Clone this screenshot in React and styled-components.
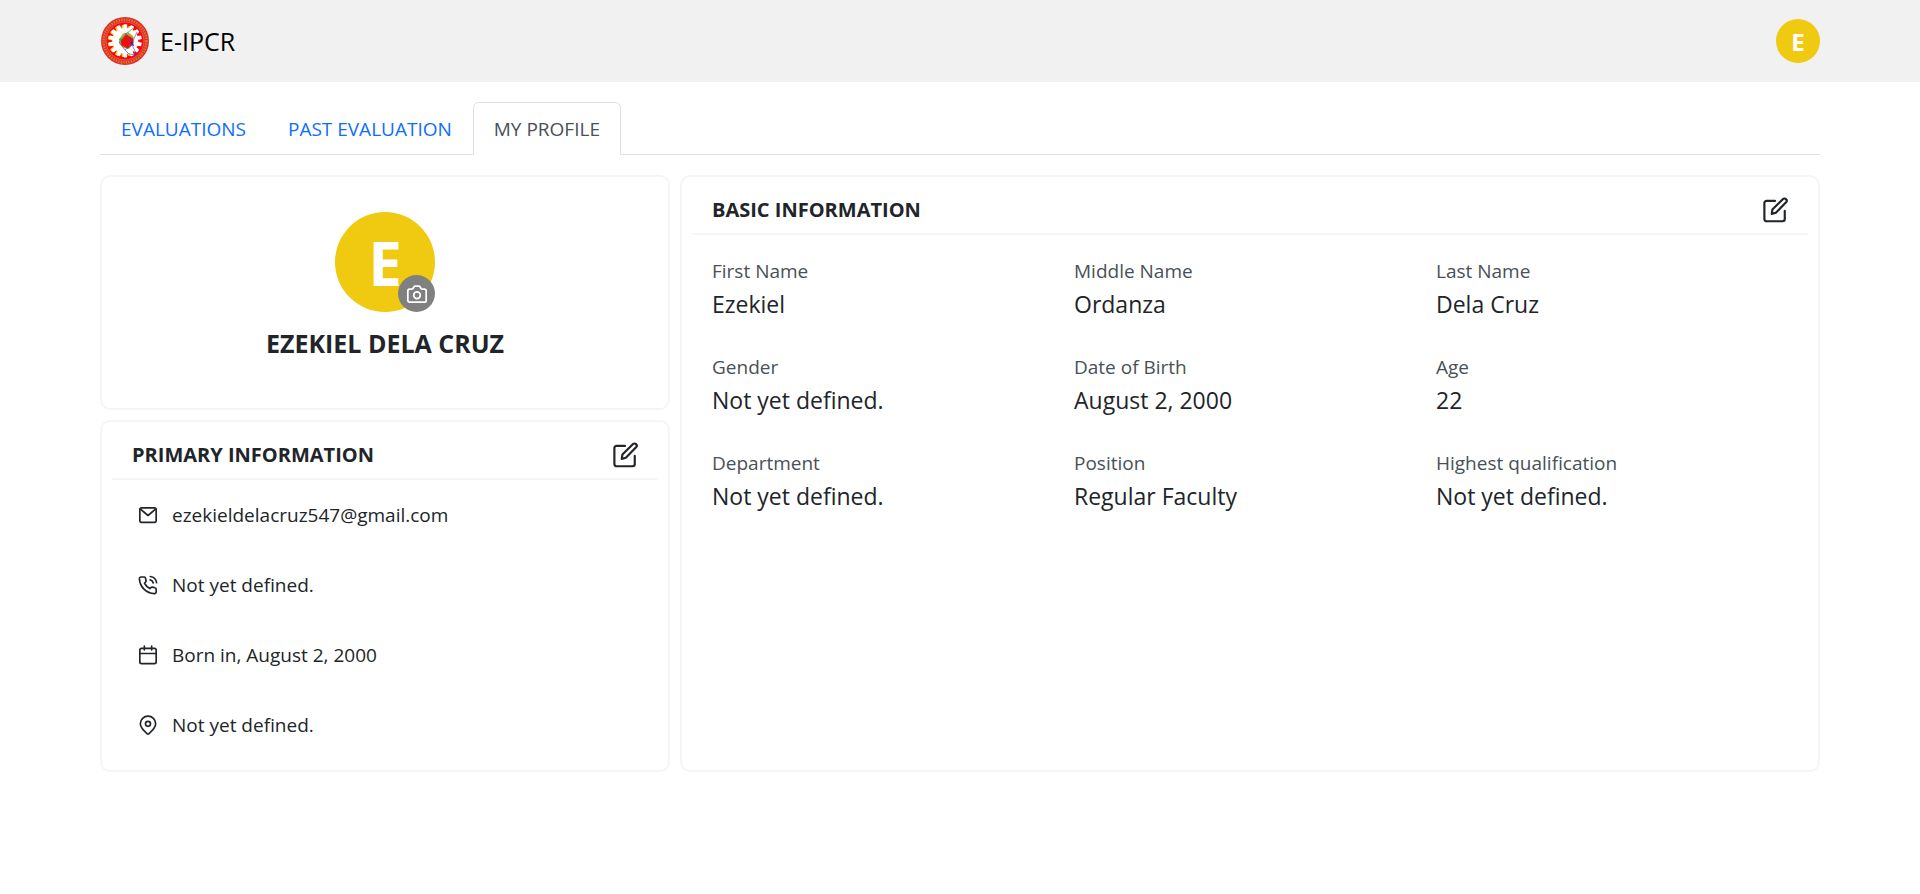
import React from "react";
import styled, { createGlobalStyle } from "styled-components";

const GlobalStyle = createGlobalStyle`
  *, *::before, *::after { box-sizing: border-box; }
  body {
    margin: 0;
    background: #fff;
    color: #212529;
    font-family: "Segoe UI", "Open Sans", "Noto Sans", sans-serif;
    font-size: 19px;
    line-height: 30px;
  }
  h1, h2, p, dl, dd, ul { margin: 0; padding: 0; }
  button { font: inherit; color: inherit; border: 0; background: none; padding: 0; cursor: pointer; }
  svg { display: block; }
`;

const Header = styled.header`
  display: flex;
  align-items: center;
  justify-content: space-between;
  height: 82px;
  padding: 0 100px;
  background: #f1f1f1;
`;

const Brand = styled.a`
  display: flex;
  align-items: center;
  gap: 10px;
  color: #000;
  font-size: 25px;
  font-weight: 500;
  text-decoration: none;
`;

const Avatar = styled.span`
  display: flex;
  align-items: center;
  justify-content: center;
  width: ${(p) => p.$size}px;
  height: ${(p) => p.$size}px;
  padding-top: 2px;
  border-radius: 50%;
  background: #f0c911;
  color: #fff;
  font-size: ${(p) => p.$font}px;
  font-weight: 700;
  line-height: 1;
`;

const Main = styled.main`
  padding: 20px 100px;
`;

const Tabs = styled.nav`
  display: flex;
  border-bottom: 1px solid #dee2e6;
`;

const Tab = styled.a`
  margin-bottom: -1px;
  padding: 11px 20px 10px;
  border: 1px solid;
  border-color: ${(p) => (p.$active ? "#dee2e6 #dee2e6 #fff" : "transparent")};
  border-radius: 6px 6px 0 0;
  color: ${(p) => (p.$active ? "#495057" : "#0d6efd")};
  text-decoration: none;
`;

const Columns = styled.div`
  display: grid;
  grid-template-columns: 1fr 2fr;
  gap: 10px;
  margin-top: 20px;
`;

const Side = styled.div`
  display: flex;
  flex-direction: column;
  gap: 10px;
`;

const Card = styled.section`
  padding: 10px;
  border: 2px solid #f5f5f5;
  border-radius: 10px;
`;

const ProfileCard = styled(Card)`
  display: flex;
  flex-direction: column;
  align-items: center;
  gap: 16px;
  padding: 35px 10px 50px;
`;

const Portrait = styled.div`
  position: relative;
`;

const CameraButton = styled.button`
  position: absolute;
  right: 0;
  bottom: 0;
  display: flex;
  align-items: center;
  justify-content: center;
  width: 37px;
  height: 37px;
  border-radius: 50%;
  background: #808080;
  color: #fff;
`;

const PersonName = styled.h1`
  font-size: 25px;
  font-weight: 700;
  line-height: 30px;
`;

const CardHead = styled.div`
  display: flex;
  align-items: center;
  justify-content: space-between;
  height: 48px;
  padding: 0 20px;
  border-bottom: 2px solid #f5f5f5;
`;

const CardTitle = styled.h2`
  font-size: 20px;
  font-weight: 700;
`;

const ContactList = styled.ul`
  list-style: none;
`;

const Contact = styled.li`
  display: flex;
  align-items: center;
  gap: 14px;
  height: 70px;
  padding: 0 26px;
`;

const Fields = styled.dl`
  display: grid;
  grid-template-columns: repeat(3, 1fr);
  gap: 30px 10px;
  padding: 21px 20px;
`;

const Label = styled.dt`
  color: #495057;
`;

const Value = styled.dd`
  font-size: 23px;
  line-height: 36px;
`;

const Icon = ({ size, stroke = 2, children }) => (
  <svg
    width={size}
    height={size}
    viewBox="0 0 24 24"
    fill="none"
    stroke="currentColor"
    strokeWidth={stroke}
    strokeLinecap="round"
    strokeLinejoin="round"
    aria-hidden="true"
  >
    {children}
  </svg>
);

const EditIcon = () => (
  <Icon size={26}>
    <path d="M12 3.6H4.2A2 2 0 0 0 2.2 5.6V20.4A2 2 0 0 0 4.2 22.4H19A2 2 0 0 0 21 20.4V12.8" />
    <path d="M9 15.6L9.6 11.6L19.2 2A1.9 1.9 0 0 1 22.2 4.9L12.8 14.6Z" />
  </Icon>
);

const CameraIcon = () => (
  <Icon size={22} stroke={1.9}>
    <path d="M2 19V8.6A1.9 1.9 0 0 1 3.9 6.7H6.2A1.6 1.6 0 0 0 7.6 6L8.7 4.1A1.4 1.4 0 0 1 9.9 3.4H14.1A1.4 1.4 0 0 1 15.3 4.1L16.4 6A1.6 1.6 0 0 0 17.8 6.7H20.1A1.9 1.9 0 0 1 22 8.6V19A1.9 1.9 0 0 1 20.1 20.9H3.9A1.9 1.9 0 0 1 2 19Z" />
    <circle cx="12" cy="13.4" r="3.6" />
  </Icon>
);

const MailIcon = () => (
  <Icon size={20}>
    <rect x="2.2" y="3.4" width="19.6" height="17.4" rx="2.2" />
    <path d="M3 5L12 12.6L21 5" />
  </Icon>
);

const PhoneIcon = () => (
  <Icon size={20}>
    <path d="M7.6 2.4H3.6A2 2 0 0 0 1.7 4.6C2.3 14.4 9.8 21.8 19.6 22.4A2 2 0 0 0 21.8 20.4V17.2A2 2 0 0 0 20.2 15.3L17.3 14.6A2 2 0 0 0 15.4 15.1L14.2 16.3C11.5 14.9 9.2 12.6 7.8 9.9L9.1 8.6A2 2 0 0 0 9.6 6.7L9 3.6A1.6 1.6 0 0 0 7.6 2.4Z" />
    <path d="M14.8 1.8C18.8 2.3 21.8 5.3 22.3 9.3" />
    <path d="M14.6 5.9C16.6 6.3 17.9 7.6 18.3 9.6" />
  </Icon>
);

const CalendarIcon = () => (
  <Icon size={20}>
    <rect x="2.2" y="4" width="19.6" height="18.4" rx="2" />
    <path d="M2.2 10.2H21.8M7.6 1.4V6M16.4 1.4V6" />
  </Icon>
);

const PinIcon = () => (
  <Icon size={20}>
    <path d="M21.2 10.6C21.2 15.2 16.6 19.4 13.2 22.4A1.8 1.8 0 0 1 10.8 22.4C7.4 19.4 2.8 15.2 2.8 10.6A9.2 9.2 0 0 1 21.2 10.6Z" />
    <circle cx="12" cy="10.6" r="3" />
  </Icon>
);

const TEETH = Array.from({ length: 14 }, (_, i) => (i * 360) / 14);

const Logo = () => (
  <svg width="50" height="50" viewBox="0 0 50 50" aria-hidden="true">
    <circle cx="25" cy="25" r="24" fill="#dc3030" />
    <circle cx="25" cy="25" r="21.4" fill="none" stroke="#dd7a1c" strokeWidth="2.4" strokeDasharray="1.4 1.2" />
    <circle cx="25" cy="25" r="18.9" fill="#fa0606" stroke="#ee7a70" strokeWidth="0.6" />
    <g fill="#e8d92a">
      {TEETH.map((a) => (
        <rect key={a} x="21.6" y="9" width="4" height="6" rx="1" transform={`rotate(${a} 23.6 25)`} />
      ))}
    </g>
    <g fill="#fff">
      {TEETH.map((a) => (
        <rect key={a} x="23.4" y="8.2" width="3.8" height="6" rx="0.8" transform={`rotate(${a} 25.3 24.8)`} />
      ))}
      <circle cx="25.3" cy="24.8" r="13" />
    </g>
    <path d="M19.4 23L23 17.4L28.6 16.2L33.4 20.6L34 27L29 33L23.4 32L19.4 28Z" fill="#b7a53c" />
    <path d="M20.6 25L26 18.2L33 22.4L33.2 27.4L27.4 32.4L21.6 29.2Z" fill="#f20d0d" />
    <path d="M19 26L27 17L34 11.6" fill="none" stroke="#2fae3a" strokeWidth="0.7" />
    <path d="M19 26L25 34L32 29L37 39L29 38L25 34M25 17L32 27L37 16" fill="none" stroke="#3a43d8" strokeWidth="0.6" />
    <circle cx="20.5" cy="23.5" r="1.2" fill="#2fae3a" />
    <path d="M31 26L33.6 29.6" stroke="#1b1bd0" strokeWidth="1.2" />
  </svg>
);

const TABS = ["EVALUATIONS", "PAST EVALUATION", "MY PROFILE"];

const CONTACTS = [
  [MailIcon, "ezekieldelacruz547@gmail.com"],
  [PhoneIcon, "Not yet defined."],
  [CalendarIcon, "Born in, August 2, 2000"],
  [PinIcon, "Not yet defined."],
];

const FIELDS = [
  ["First Name", "Ezekiel"],
  ["Middle Name", "Ordanza"],
  ["Last Name", "Dela Cruz"],
  ["Gender", "Not yet defined."],
  ["Date of Birth", "August 2, 2000"],
  ["Age", "22"],
  ["Department", "Not yet defined."],
  ["Position", "Regular Faculty"],
  ["Highest qualification", "Not yet defined."],
];

export default function App() {
  return (
    <>
      <GlobalStyle />
      <Header>
        <Brand href="#home">
          <Logo />
          E-IPCR
        </Brand>
        <button type="button" aria-label="Account menu">
          <Avatar $size={44} $font={24}>E</Avatar>
        </button>
      </Header>
      <Main>
        <Tabs>
          {TABS.map((name) => (
            <Tab key={name} href="#tab" $active={name === "MY PROFILE"}>
              {name}
            </Tab>
          ))}
        </Tabs>
        <Columns>
          <Side>
            <ProfileCard>
              <Portrait>
                <Avatar $size={100} $font={60}>E</Avatar>
                <CameraButton type="button" aria-label="Change photo">
                  <CameraIcon />
                </CameraButton>
              </Portrait>
              <PersonName>EZEKIEL DELA CRUZ</PersonName>
            </ProfileCard>
            <Card>
              <CardHead>
                <CardTitle>PRIMARY INFORMATION</CardTitle>
                <button type="button" aria-label="Edit primary information">
                  <EditIcon />
                </button>
              </CardHead>
              <ContactList>
                {CONTACTS.map(([Glyph, text], i) => (
                  <Contact key={i}>
                    <Glyph />
                    <span>{text}</span>
                  </Contact>
                ))}
              </ContactList>
            </Card>
          </Side>
          <Card>
            <CardHead>
              <CardTitle>BASIC INFORMATION</CardTitle>
              <button type="button" aria-label="Edit basic information">
                <EditIcon />
              </button>
            </CardHead>
            <Fields>
              {FIELDS.map(([label, value]) => (
                <div key={label}>
                  <Label>{label}</Label>
                  <Value>{value}</Value>
                </div>
              ))}
            </Fields>
          </Card>
        </Columns>
      </Main>
    </>
  );
}
